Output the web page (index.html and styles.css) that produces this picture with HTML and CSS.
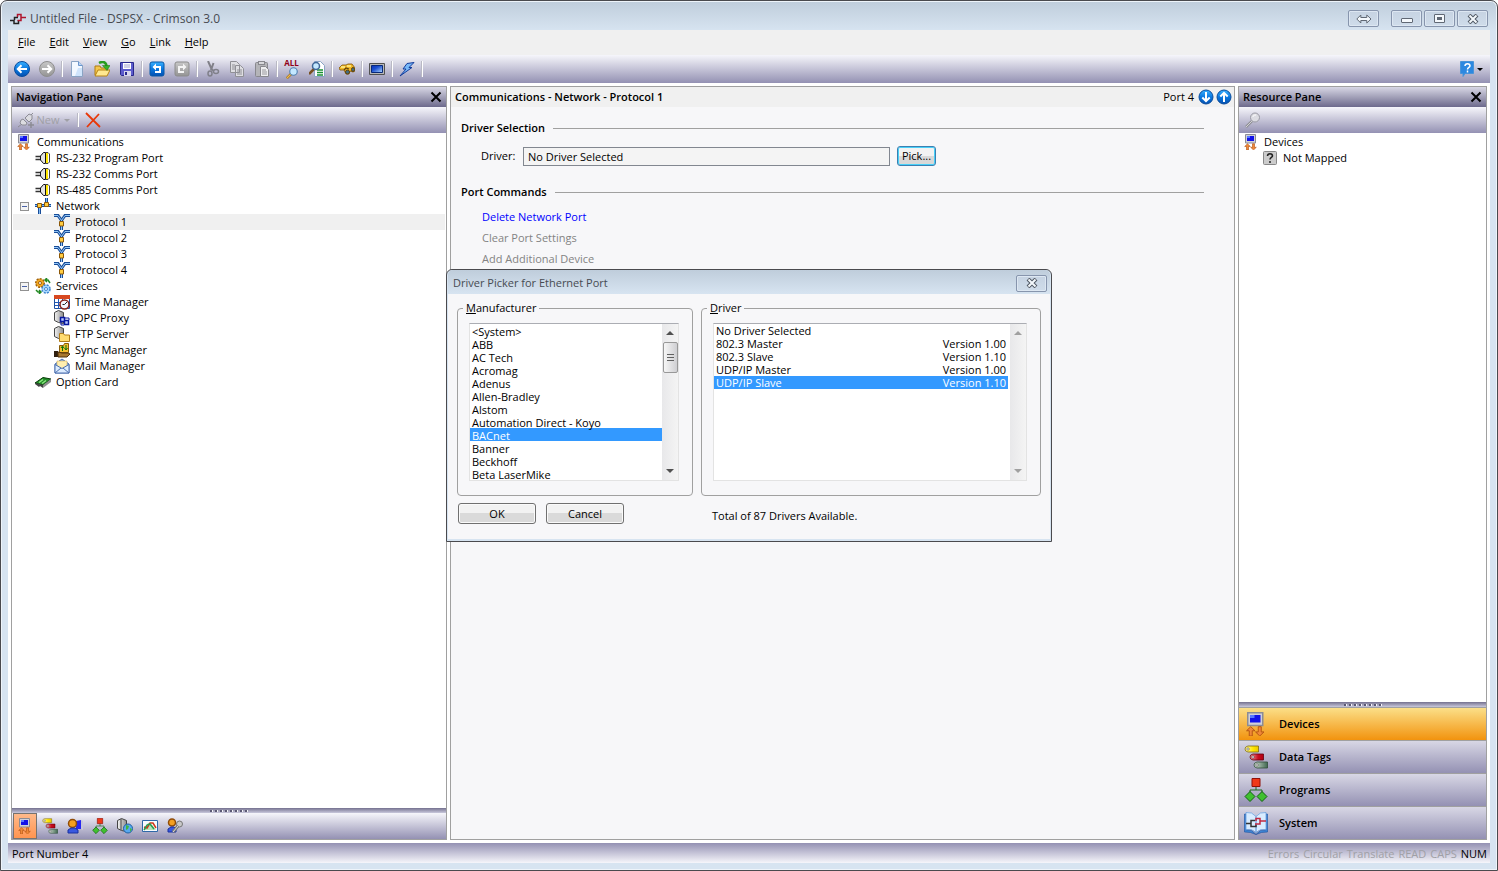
FILE: index.html
```html
<!DOCTYPE html>
<html lang="en">
<head>
    <meta charset="utf-8">
    <title>Untitled File - DSPSX - Crimson 3.0</title>
    <link rel="stylesheet" href="styles.css">
</head>
<body>
    <!-- Icon sprite -->
    <svg class="sprite" width="0" height="0" aria-hidden="true">
        <defs>
            <linearGradient id="blue" x1="0" y1="0" x2="0" y2="1"><stop offset="0" stop-color="#39b0ff"/><stop offset=".5" stop-color="#0a78e0"/><stop offset="1" stop-color="#0450b0"/></linearGradient>
            <linearGradient id="gray" x1="0" y1="0" x2="0" y2="1"><stop offset="0" stop-color="#c8c8c8"/><stop offset="1" stop-color="#949494"/></linearGradient>
            <linearGradient id="screen" x1="0" y1="0" x2="1" y2="1"><stop offset="0" stop-color="#0a2fb8"/><stop offset=".4" stop-color="#1c50d0"/><stop offset="1" stop-color="#b4dcff"/></linearGradient>
            <linearGradient id="metal" x1="0" y1="0" x2="1" y2="0"><stop offset="0" stop-color="#f4f4f4"/><stop offset="1" stop-color="#8c8c8c"/></linearGradient>
            <linearGradient id="yellow" x1="0" y1="0" x2="1" y2="0"><stop offset="0" stop-color="#fff8b0"/><stop offset=".6" stop-color="#ffe600"/><stop offset="1" stop-color="#e8c800"/></linearGradient>
            <linearGradient id="red" x1="0" y1="0" x2="1" y2="0"><stop offset="0" stop-color="#f0a0a0"/><stop offset=".6" stop-color="#c80c20"/><stop offset="1" stop-color="#b00010"/></linearGradient>
            <linearGradient id="green" x1="0" y1="0" x2="1" y2="0"><stop offset="0" stop-color="#d0dcd0"/><stop offset="1" stop-color="#406850"/></linearGradient>
        </defs>
        <symbol id="i-logo" viewBox="0 0 16 16">
            <path d="M0 9.500H4V12.500H8.500V9M4.500 9V6.500H8" fill="none" stroke="#222" stroke-width="1.500"/>
            <path d="M7.500 9.500H11V3.500H7.500V6M11 6.500H16" fill="none" stroke="#b0142c" stroke-width="1.500"/>
        </symbol>
        <symbol id="i-back" viewBox="0 0 16 16"><circle cx="8" cy="8" r="7.500" fill="url(#blue)" stroke="#0a4c9c"/><path d="M13 8H4M7.500 4.300L3.800 8l3.700 3.700" fill="none" stroke="#fff" stroke-width="2"/></symbol>
        <symbol id="i-forward" viewBox="0 0 16 16"><circle cx="8" cy="8" r="7.500" fill="url(#gray)" stroke="#8e8e8e"/><path d="M3 8h9M8.500 4.300L12.200 8l-3.700 3.700" fill="none" stroke="#fff" stroke-width="2"/></symbol>
        <symbol id="i-down" viewBox="0 0 16 16"><circle cx="8" cy="8" r="7" fill="url(#blue)" stroke="#0a4c9c"/><path d="M8 3v9M4.300 8.500L8 12.200l3.700-3.700" fill="none" stroke="#fff" stroke-width="2"/></symbol>
        <symbol id="i-up" viewBox="0 0 16 16"><circle cx="8" cy="8" r="7" fill="url(#blue)" stroke="#0a4c9c"/><path d="M8 13V4M4.300 7.500L8 3.800l3.700 3.700" fill="none" stroke="#fff" stroke-width="2"/></symbol>
        <symbol id="i-new" viewBox="0 0 16 16"><path d="M2.500.5h7l4 4v11h-11z" fill="#f2f8ff" stroke="#8aa4c4"/><path d="M9.500.5v4h4" fill="#b8d4f4" stroke="#6a94cc"/><path d="M9 7h4v8H6z" fill="#cfe4fb"/></symbol>
        <symbol id="i-open" viewBox="0 0 16 16"><path d="M1 14V5h5l1 2h6v7z" fill="#f4c64c" stroke="#b07c10"/><path d="M1 15l3-6h12l-3 6z" fill="#ffe890" stroke="#b88414"/><path d="M5 2c4-2 7-1 7.500 3" fill="none" stroke="#2a9c20" stroke-width="2.500"/><path d="M8.500 4.500h7.500l-3 5z" fill="#38b428" stroke="#187010" stroke-width=".5"/></symbol>
        <symbol id="i-save" viewBox="0 0 16 16"><path d="M1.500 1.500h13v13h-12l-1-1z" fill="#5c5ccc" stroke="#28288c"/><path d="M4 2h8v6H4z" fill="#fff"/><path d="M5 4h6M5 6h6" stroke="#a0a0d0"/><path d="M5 10h7v5H5z" fill="#d8d8ec"/><path d="M6 11h2v3H6z" fill="#28288c"/></symbol>
        <symbol id="i-undo" viewBox="0 0 16 16"><rect x="1" y="1" width="14" height="14" rx="2" fill="url(#blue)" stroke="#0858a8"/><path d="M7 2.500L3.500 6 7 9.500V7h3v3H6v2h6V5H7z" fill="#fff"/></symbol>
        <symbol id="i-redo" viewBox="0 0 16 16"><rect x="1" y="1" width="14" height="14" rx="2" fill="url(#gray)" stroke="#8c8c8c"/><path d="M9 2.500L12.500 6 9 9.500V7H6v3h4v2H4V5h5z" fill="#f4f4f4"/></symbol>
        <symbol id="i-cut" viewBox="0 0 16 16"><path d="M4 0l4 9M9.500 2L7 9" stroke="#808088" stroke-width="2" fill="none"/><ellipse cx="6" cy="12.500" rx="2" ry="2.500" fill="none" stroke="#80808a" stroke-width="1.500"/><ellipse cx="12" cy="10.500" rx="2.500" ry="2" fill="none" stroke="#80808a" stroke-width="1.500"/><path d="M7 8l3 2" stroke="#80808a" stroke-width="2"/></symbol>
        <symbol id="i-copy" viewBox="0 0 16 16"><path d="M1.500.5h6l3 3v8h-9zM6.500 4.500h5l3 3v8h-8z" fill="#dedee2" stroke="#909096"/><path d="M3 4h3M3 6h3M3 8h3M8 9h5M8 11h5M8 13h5" stroke="#909096"/></symbol>
        <symbol id="i-paste" viewBox="0 0 16 16"><rect x="1.500" y="1.500" width="12" height="14" rx="1" fill="#b4b4b8" stroke="#88888e"/><rect x="4.500" y=".5" width="6" height="3" fill="#d8d8dc" stroke="#88888e"/><path d="M6.500 5.500h5l3 3v7h-8z" fill="#eeeef0" stroke="#88888e"/><path d="M8 9h4M8 11h5M8 13h5" stroke="#98989c"/></symbol>
        <symbol id="i-glass" viewBox="0 0 16 16"><path d="M1 15l7-7" stroke="#98702c" stroke-width="3.500"/><path d="M1 15l7-7" stroke="#f0b850" stroke-width="1.500"/><circle cx="10" cy="6" r="5" fill="#c4e8ff" stroke="#5080b0" stroke-width="1.500"/></symbol>
        <symbol id="i-glassoff" viewBox="0 0 16 16"><path d="M1 15l6-6" stroke="#909096" stroke-width="2.500"/><path d="M1 15l6-6" stroke="#d0d0d4"/><circle cx="10" cy="5.500" r="4.500" fill="#dcdce2" stroke="#9a9aa4"/><path d="M8 5c0-1.500 1-2 3-2" stroke="#fff" fill="none"/></symbol>
        <symbol id="i-findin" viewBox="0 0 16 16"><path d="M5.500.5h6l4 4v11h-10z" fill="#fff" stroke="#8aa4c4"/><path d="M8 9h6M8 11.500h6M8 14h6" stroke="#189030" stroke-width="1.500"/><path d="M0 13l5-5" stroke="#785020" stroke-width="2.500"/><circle cx="7" cy="5" r="3.500" fill="#c4e8ff" stroke="#406898" stroke-width="1.500"/></symbol>
        <symbol id="i-binoc" viewBox="0 0 16 16"><path d="M0 7l3-3h4l2-1h4l3 4v3l-2 1-3-1-1 3H7L5 9H1z" fill="#f0b828" stroke="#805408" stroke-width=".8"/><path d="M2 6h4M8 5h4" stroke="#fff090" stroke-width="1.500" fill="none"/><path d="M5 9l2-2 3 1" stroke="#604008" stroke-width="1.200" fill="none"/><ellipse cx="8.500" cy="11" rx="2" ry="2" fill="#407088" stroke="#604008"/><ellipse cx="14" cy="8.500" rx="1.500" ry="2" fill="#407088" stroke="#604008"/></symbol>
        <symbol id="i-screen" viewBox="0 0 16 16"><path d="M.5 2.500h15v11H.5z" fill="#b8b8b8" stroke="#505050"/><path d="M2.500 4.500h11v7h-11z" fill="url(#screen)" stroke="#082878"/></symbol>
        <symbol id="i-bolt" viewBox="0 0 16 16"><path d="M8 2.500l7-1-5 5h3L1 15l6-7H4z" fill="#78b8f8" stroke="#123c9c"/></symbol>
        <symbol id="i-help" viewBox="0 0 16 16"><path d="M1.500.5h13v12H6l-2 3v-3H1.500z" fill="#2c88e0" stroke="#4a94d8"/><path d="M6 5c0-3 5-3 5 0 0 1.500-2.500 1.500-2.500 3.500M8.500 9.500v2" stroke="#fff" stroke-width="1.500" fill="none"/></symbol>
        <symbol id="i-plugnew" viewBox="0 0 16 16"><path d="M0 15l4-3" stroke="#8c8c94"/><path d="M3 8l2-1 4 4-1 2H4l-2-2zM7 6l4-4 2 1 2-2M7 6l4 4 3-3V3" fill="#dcdce0" stroke="#8c8c94"/><path d="M10 13h6M13 10v6" stroke="#8c8c94" stroke-width="1.500"/></symbol>
        <symbol id="i-delete" viewBox="0 0 16 16"><path d="M1 1l14 14M14 2L2 15" stroke="#e83808" stroke-width="1.800" fill="none"/></symbol>
        <symbol id="i-comm" viewBox="0 0 16 16"><path d="M2.500.5h10v8.500h-10z" fill="#d0d0d8" stroke="#8c8c94"/><path d="M4 2h7v5H4z" fill="#1212e8"/><path d="M4 2h3v2H4z" fill="#5878ff"/><path d="M4.500 9.800l2.800 2.700H5.500V16h-2v-3.500H1.700zM10.500 16l-2.800-2.700h1.800V9.800h2v3.500h1.800z" fill="#f08838" stroke="#b05010" stroke-width=".6"/></symbol>
        <symbol id="i-port" viewBox="0 0 16 16"><path d="M0.500 6.500h5M.5 9.500h5" stroke="#333" stroke-width="1.500"/><path d="M5.500 6l3-3.500h2v11h-2l-3-3.500z" fill="#e4e4e4" stroke="#111"/><path d="M11 3h2v10h-2z" fill="#ffe600"/><path d="M11 2.500h2l1.500 1.500v8L13 13.500h-2" fill="none" stroke="#444"/></symbol>
        <symbol id="i-network" viewBox="0 0 16 16"><path d="M0 7.500h16M4.500 8v8M11.500 0v7" stroke="#184c98" stroke-width="3"/><path d="M0 7.500h16M4.500 8v8M11.500 0v7" stroke="#80b8f0"/><path d="M2.500 5.500h4v4h-4zM9.500 4.500h4v4h-4z" fill="#ffcc40" stroke="#8c5808"/></symbol>
        <symbol id="i-protocol" viewBox="0 0 16 16"><path d="M0 1.500h4l3.500 5 3.500-5h5M7.500 6v10" stroke="#184c98" stroke-width="3" fill="none"/><path d="M0 1.500h4l3.500 5 3.500-5h5M7.500 6v10" stroke="#94c8f8" fill="none"/><path d="M5.500 7.500h4v4.500h-4z" fill="#ffcc40" stroke="#8c5808"/></symbol>
        <symbol id="i-gears" viewBox="0 0 16 16"><circle cx="5" cy="5" r="4" fill="#f4b030" stroke="#a06008" stroke-width="2" stroke-dasharray="2 1"/><circle cx="5" cy="5" r="3.500" fill="#f4a820"/><circle cx="5" cy="5" r="1.500" fill="#fff" stroke="#a06008"/><circle cx="11" cy="11" r="3.800" fill="#a8d8ff" stroke="#4088d0" stroke-width="2" stroke-dasharray="2 1"/><circle cx="11" cy="11" r="3.200" fill="#a8d8ff"/><circle cx="11" cy="11" r="1.500" fill="#fff" stroke="#4088d0"/><path d="M10 2h3l2 3M12 0l-2 2 2 2M6 14H3l-2-2M4 16l2-2-2-2" stroke="#208820" stroke-width="1.500" fill="none"/></symbol>
        <symbol id="i-time" viewBox="0 0 16 16"><path d="M.5 1.500h15v13H.5z" fill="#fff" stroke="#2050a0"/><path d="M0 1h16v4H0z" fill="#d84820"/><path d="M1 8.500h14M1 11.500h14M4.500 5v9M8.500 5v9" stroke="#2058b8"/><circle cx="10.500" cy="10.500" r="4.500" fill="#f4f4ff" stroke="#882018" stroke-width="1.500"/><path d="M10.500 10.500L13 8M10.500 10.500h-2" stroke="#222"/></symbol>
        <symbol id="i-opc" viewBox="0 0 16 16"><path d="M.5 2.500l4-2 5 2v11l-5-1-4-2z" fill="url(#metal)" stroke="#444"/><path d="M6.500 7.500h4v4h-4zM10.500 10.500h4v4h-4z" fill="#b8c8ff" stroke="#0818a0" stroke-width="1.500"/><path d="M10 8h5v2M7 12v3h3" fill="none" stroke="#0818a0"/></symbol>
        <symbol id="i-ftp" viewBox="0 0 16 16"><path d="M.5 2.500l4-2 5 2v11l-5-1-4-2z" fill="url(#metal)" stroke="#444"/><path d="M5.500 15.500v-8h4l1 1.500h5v6.500z" fill="#ffdc70" stroke="#b07c18"/></symbol>
        <symbol id="i-sync" viewBox="0 0 16 16"><path d="M5.500 3.500h4l1-2h4v9h-9z" fill="#f4c030" stroke="#885c08"/><path d="M8.500 9V5M7 6l1.500-2L10 6M12 3v4M10.500 6L12 8l1.500-2" stroke="#087008" fill="none"/><path d="M0 9h4v6H0z" fill="#302010"/><path d="M4 10l4 1h6l2 1-3 3H4z" fill="#a87830" stroke="#503008"/></symbol>
        <symbol id="i-mail" viewBox="0 0 16 16"><path d="M1 6l7-5 7 5v9H1z" fill="#88b0e8" stroke="#4c70b0"/><path d="M3 8V3h10v5l-5 3z" fill="#ffeeb0" stroke="#c8a040" stroke-width=".5"/><path d="M1 6.500l7 4 7-4V15H1z" fill="#dcecff" stroke="#4c70b0"/><path d="M1 15l6-5M15 15l-6-5" stroke="#4c70b0"/></symbol>
        <symbol id="i-card" viewBox="0 0 16 16"><path d="M0 9l8-5.500 8 1.500-8 6z" fill="#208c28" stroke="#083c08"/><path d="M4 8.500l4-3M7 9.500l4-3" stroke="#90e880" stroke-width="1.500"/><path d="M0 9l8 2v3l-3-2-1 1-4-3z" fill="#444"/><path d="M8 11l8-6v3l-8 6z" fill="#909090"/></symbol>
        <symbol id="i-unmapped" viewBox="0 0 16 16"><rect x="1.500" y="1.500" width="13" height="13" rx="1" fill="#ccc" stroke="#888"/><path d="M5.500 6c0-3 5-3 5 0 0 1.500-2.500 1.500-2.500 3.500M8 11v2" stroke="#222" stroke-width="1.500" fill="none"/></symbol>
        <symbol id="i-tags" viewBox="0 0 24 24"><path d="M14.500 1v6H4Q1 6.500 1 4T4 1z" fill="url(#yellow)" stroke="#806c10" stroke-width=".8"/><path d="M19.500 9v6H9q-3-.5-3-3t3-3z" fill="url(#red)" stroke="#680010" stroke-width=".8"/><path d="M23.500 17v6H13q-3-.5-3-3t3-3z" fill="url(#green)" stroke="#304c38" stroke-width=".8"/><path d="M3 3h2v2H3zM8 11h2v2H8zM12 19h2v2h-2z" fill="#fff" stroke="#444" stroke-width=".5"/></symbol>
        <symbol id="i-programs" viewBox="0 0 24 24"><path d="M12 8v4M6 17v-5h12v5" fill="none" stroke="#206820"/><path d="M8 .5h8v8H8z" fill="#f03818" stroke="#901008"/><path d="M1 18.500l5-5 5 5-5 5zM13 18.500l5-5 5 5-5 5z" fill="#40c030" stroke="#106010"/></symbol>
        <symbol id="i-user" viewBox="0 0 16 16"><path d="M9 3l5-1v9H9z" fill="#2828f0"/><path d="M14 2l2 1v9l-2-1z" fill="#c8c8d8"/><circle cx="5.500" cy="5.500" r="4" fill="#f4a020" stroke="#904c08" stroke-width="1.500"/><path d="M1 15v-3l3-2h4l3 2v3z" fill="#3858e0" stroke="#1830a0"/></symbol>
        <symbol id="i-web" viewBox="0 0 16 16"><path d="M.5 2.500l4-2 5 2v11l-5-1-4-2z" fill="url(#metal)" stroke="#444"/><path d="M4 1v11" stroke="#444"/><circle cx="11" cy="10.500" r="4.500" fill="#58a8f0" stroke="#2060a0"/><path d="M9 7l3 1-1 3-2 1zM13 10l2 1-2 3z" fill="#40b840"/></symbol>
        <symbol id="i-chart" viewBox="0 0 16 16"><path d="M.5 2.500h15v11H.5z" fill="#f8fcff" stroke="#3068a8"/><path d="M2 12L6 5l4 2 4 5z" fill="#b8e4b8"/><path d="M2 9l3 1 3-5h3l3 5" fill="none" stroke="#d03818" stroke-width="1.500"/><path d="M2 12l3-5 3-1 4 5" fill="none" stroke="#289c50" stroke-width="1.500"/></symbol>
        <symbol id="i-userkey" viewBox="0 0 16 16"><circle cx="5" cy="4.500" r="3.500" fill="#f4a020" stroke="#904c08" stroke-width="1.500"/><path d="M1 14v-3l3-2h3l2 2v3z" fill="#3858e0" stroke="#1830a0"/><circle cx="12.500" cy="6" r="3" fill="#c8c8c8" stroke="#777"/><path d="M11 8l-5 6" stroke="#777" stroke-width="3"/><path d="M11 8l-5 6" stroke="#ddd"/></symbol>
        <symbol id="i-system" viewBox="0 0 24 24"><path d="M.5 3h2v16l5 .5 4.500 4 4.500-4 5-.5V3h2v18l-6 .5-5.500 2-5.500-2-6-.5z" fill="#3c84d4" stroke="#1c50a0" stroke-width=".6"/><path d="M2 1.500q6-1 10 4v16q-4-4-10-3zM22 1.500q-6-1-10 4v16q4-4 10-3z" fill="#d8ecff" stroke="#6ca0dc" stroke-width=".8"/><path d="M2 12.500h5v3h5v-2M7 12V9.500h4" fill="none" stroke="#333" stroke-width="1.500"/><path d="M22 10h-6v3h-5M16 10V7.500h-4V10" fill="none" stroke="#c02840" stroke-width="1.500"/></symbol>
        <symbol id="i-close" viewBox="0 0 12 12"><path d="M1.500 1.500l9 9M10.500 1.500l-9 9" stroke="#000" stroke-width="2"/></symbol>
        <symbol id="i-winclose" viewBox="0 0 12 10"><path d="M2 1l8 8M10 1L2 9" stroke="#505864" stroke-width="4"/><path d="M2.500 1.500l7 7M9.500 1.500l-7 7" stroke="#f4f8fc" stroke-width="2"/></symbol>
        <symbol id="i-resize" viewBox="0 0 16 10"><path d="M.8 5l4-4v2.500h6V1l4.200 4-4.200 4V6.500h-6V9z" fill="#f4f8fc" stroke="#606874"/></symbol>
    </svg>

    <div class="window">
        <header class="titlebar">
            <svg class="icon"><use href="#i-logo"/></svg>
            <span class="title">Untitled File - DSPSX - Crimson 3.0</span>
            <button class="win-btn win-btn-resize" title="Resize"><svg width="16" height="10"><use href="#i-resize"/></svg></button>
            <button class="win-btn" title="Minimize"><span class="glyph-min"></span></button>
            <button class="win-btn" title="Maximize"><span class="glyph-max"></span></button>
            <button class="win-btn" title="Close"><svg width="12" height="10"><use href="#i-winclose"/></svg></button>
        </header>

        <div class="client">
            <nav class="menubar">
                <button><u>F</u>ile</button>
                <button><u>E</u>dit</button>
                <button><u>V</u>iew</button>
                <button><u>G</u>o</button>
                <button><u>L</u>ink</button>
                <button><u>H</u>elp</button>
            </nav>

            <div class="toolbar main-toolbar">
                <button title="Back"><svg class="icon"><use href="#i-back"/></svg></button>
                <button title="Forward"><svg class="icon"><use href="#i-forward"/></svg></button>
                <span class="sep"></span>
                <button title="New"><svg class="icon"><use href="#i-new"/></svg></button>
                <button title="Open"><svg class="icon"><use href="#i-open"/></svg></button>
                <button title="Save"><svg class="icon"><use href="#i-save"/></svg></button>
                <span class="sep"></span>
                <button title="Undo"><svg class="icon"><use href="#i-undo"/></svg></button>
                <button title="Redo"><svg class="icon"><use href="#i-redo"/></svg></button>
                <span class="sep"></span>
                <button title="Cut"><svg class="icon"><use href="#i-cut"/></svg></button>
                <button title="Copy"><svg class="icon"><use href="#i-copy"/></svg></button>
                <button title="Paste"><svg class="icon"><use href="#i-paste"/></svg></button>
                <span class="sep"></span>
                <button title="Find All" class="find-all"><span>ALL</span><svg width="12" height="12"><use href="#i-glass"/></svg></button>
                <button title="Find in File"><svg class="icon"><use href="#i-findin"/></svg></button>
                <span class="sep"></span>
                <button title="Search"><svg class="icon"><use href="#i-binoc"/></svg></button>
                <span class="sep"></span>
                <button title="Emulator"><svg class="icon"><use href="#i-screen"/></svg></button>
                <span class="sep"></span>
                <button title="Download"><svg class="icon"><use href="#i-bolt"/></svg></button>
                <span class="sep"></span>
                <button title="Help" class="help"><svg class="icon"><use href="#i-help"/></svg><span class="caret"></span></button>
            </div>

            <main class="workspace">
                <section class="pane nav-pane">
                    <div class="pane-header">
                        <h2>Navigation Pane</h2>
                        <button class="pane-close" title="Close"><svg width="12" height="12"><use href="#i-close"/></svg></button>
                    </div>
                    <div class="toolbar pane-toolbar">
                        <button class="new-btn" disabled><svg class="icon"><use href="#i-plugnew"/></svg>New<span class="caret"></span></button>
                        <span class="sep"></span>
                        <button title="Delete"><svg class="icon"><use href="#i-delete"/></svg></button>
                    </div>
                    <ul class="tree">
                        <li class="root"><svg class="icon"><use href="#i-comm"/></svg>Communications</li>
                        <li class="level1"><svg class="icon"><use href="#i-port"/></svg>RS-232 Program Port</li>
                        <li class="level1"><svg class="icon"><use href="#i-port"/></svg>RS-232 Comms Port</li>
                        <li class="level1"><svg class="icon"><use href="#i-port"/></svg>RS-485 Comms Port</li>
                        <li class="branch"><button class="expander" title="Collapse"></button><svg class="icon"><use href="#i-network"/></svg>Network</li>
                        <li class="level2 current"><svg class="icon"><use href="#i-protocol"/></svg>Protocol 1</li>
                        <li class="level2"><svg class="icon"><use href="#i-protocol"/></svg>Protocol 2</li>
                        <li class="level2"><svg class="icon"><use href="#i-protocol"/></svg>Protocol 3</li>
                        <li class="level2"><svg class="icon"><use href="#i-protocol"/></svg>Protocol 4</li>
                        <li class="branch"><button class="expander" title="Collapse"></button><svg class="icon"><use href="#i-gears"/></svg>Services</li>
                        <li class="level2"><svg class="icon"><use href="#i-time"/></svg>Time Manager</li>
                        <li class="level2"><svg class="icon"><use href="#i-opc"/></svg>OPC Proxy</li>
                        <li class="level2"><svg class="icon"><use href="#i-ftp"/></svg>FTP Server</li>
                        <li class="level2"><svg class="icon"><use href="#i-sync"/></svg>Sync Manager</li>
                        <li class="level2"><svg class="icon"><use href="#i-mail"/></svg>Mail Manager</li>
                        <li class="level1"><svg class="icon"><use href="#i-card"/></svg>Option Card</li>
                    </ul>
                    <div class="splitter"><span></span></div>
                    <div class="toolbar category-bar">
                        <button class="selected" title="Communications"><svg class="icon"><use href="#i-comm"/></svg></button>
                        <button title="Data Tags"><svg class="icon"><use href="#i-tags"/></svg></button>
                        <button title="Display Pages"><svg class="icon"><use href="#i-user"/></svg></button>
                        <button title="Programs"><svg class="icon"><use href="#i-programs"/></svg></button>
                        <button title="Web Server"><svg class="icon"><use href="#i-web"/></svg></button>
                        <button title="Data Logger"><svg class="icon"><use href="#i-chart"/></svg></button>
                        <button title="Security"><svg class="icon"><use href="#i-userkey"/></svg></button>
                    </div>
                </section>

                <section class="pane editor">
                    <div class="editor-header">
                        <h2>Communications - Network - Protocol 1</h2>
                        <span>Port 4</span>
                        <button title="Next"><svg class="icon"><use href="#i-down"/></svg></button>
                        <button title="Previous"><svg class="icon"><use href="#i-up"/></svg></button>
                    </div>
                    <div class="editor-body">
                        <h3>Driver Selection</h3>
                        <div class="driver-row">
                            <label for="driver">Driver:</label>
                            <input id="driver" type="text" value="No Driver Selected" readonly>
                            <button class="pick">Pick...</button>
                        </div>
                        <h3>Port Commands</h3>
                        <ul class="commands">
                            <li><a href="#delete">Delete Network Port</a></li>
                            <li>Clear Port Settings</li>
                            <li>Add Additional Device</li>
                        </ul>
                    </div>
                </section>

                <section class="pane resource-pane">
                    <div class="pane-header">
                        <h2>Resource Pane</h2>
                        <button class="pane-close" title="Close"><svg width="12" height="12"><use href="#i-close"/></svg></button>
                    </div>
                    <div class="toolbar pane-toolbar">
                        <button title="Find" disabled><svg class="icon"><use href="#i-glassoff"/></svg></button>
                    </div>
                    <ul class="tree">
                        <li class="root"><svg class="icon"><use href="#i-comm"/></svg>Devices</li>
                        <li class="level1"><svg class="icon"><use href="#i-unmapped"/></svg>Not Mapped</li>
                    </ul>
                    <div class="splitter"><span></span></div>
                    <div class="categories">
                        <button class="selected"><svg width="24" height="24"><use href="#i-comm"/></svg>Devices</button>
                        <button><svg width="24" height="24"><use href="#i-tags"/></svg>Data Tags</button>
                        <button><svg width="24" height="24"><use href="#i-programs"/></svg>Programs</button>
                        <button><svg width="24" height="24"><use href="#i-system"/></svg>System</button>
                    </div>
                </section>
            </main>

            <footer class="statusbar">
                <span class="message">Port Number 4</span>
                <span>Errors</span>
                <span>Circular</span>
                <span>Translate</span>
                <span>READ</span>
                <span>CAPS</span>
                <span class="on">NUM</span>
            </footer>
        </div>
    </div>

    <div class="dialog" role="dialog" aria-labelledby="picker-title">
        <div class="dialog-title">
            <span id="picker-title">Driver Picker for Ethernet Port</span>
            <button class="win-btn" title="Close"><svg width="12" height="10"><use href="#i-winclose"/></svg></button>
        </div>
        <div class="dialog-body">
            <fieldset class="manufacturers">
                <legend><label for="manufacturer"><u>M</u>anufacturer</label></legend>
                <div class="listbox">
                    <select id="manufacturer" size="12">
                        <option>&lt;System&gt;</option>
                        <option>ABB</option>
                        <option>AC Tech</option>
                        <option>Acromag</option>
                        <option>Adenus</option>
                        <option>Allen-Bradley</option>
                        <option>Alstom</option>
                        <option>Automation Direct - Koyo</option>
                        <option selected>BACnet</option>
                        <option>Banner</option>
                        <option>Beckhoff</option>
                        <option>Beta LaserMike</option>
                    </select>
                    <div class="scrollbar">
                        <span class="arrow-up"></span>
                        <span class="thumb"></span>
                        <span class="arrow-down"></span>
                    </div>
                </div>
            </fieldset>
            <fieldset class="drivers">
                <legend><u>D</u>river</legend>
                <div class="listbox">
                    <div class="list">
                        <table>
                            <tr><td>No Driver Selected</td><td></td></tr>
                            <tr><td>802.3 Master</td><td>Version 1.00</td></tr>
                            <tr><td>802.3 Slave</td><td>Version 1.10</td></tr>
                            <tr><td>UDP/IP Master</td><td>Version 1.00</td></tr>
                            <tr class="selected"><td>UDP/IP Slave</td><td>Version 1.10</td></tr>
                        </table>
                    </div>
                    <div class="scrollbar disabled">
                        <span class="arrow-up"></span>
                        <span class="arrow-down"></span>
                    </div>
                </div>
            </fieldset>
            <div class="dialog-buttons">
                <button>OK</button>
                <button>Cancel</button>
            </div>
            <p class="total">Total of 87 Drivers Available.</p>
        </div>
    </div>
</body>
</html>
```
FILE: styles.css
```css
* {
    box-sizing: border-box;
}
body {
    margin: 0;
    background-color: #fff;
    font-family: "Segoe UI", "Open Sans", "Noto Sans", sans-serif;
    font-size: 11px;
    line-height: 16px;
    color: #000;
}
button,
input,
select {
    font: inherit;
    color: inherit;
}
button {
    display: flex;
    align-items: center;
    justify-content: center;
    margin: 0;
    padding: 0;
    border: none;
    background: none;
}
h2,
h3 {
    margin: 0;
    font-size: 11px;
    font-weight: 600;
}
ul {
    margin: 0;
    padding: 0;
    list-style: none;
}
.sprite {
    position: absolute;
}
.icon {
    width: 16px;
    height: 16px;
    flex: none;
}

/* Window frame */
.window {
    height: 100vh;
    display: flex;
    flex-direction: column;
    padding: 0 7px 7px;
    border: 1px solid #4a4a4e;
    border-radius: 7px 7px 0 0;
    background: linear-gradient(#bfcddb, #d7e4f1 30px);
    box-shadow: inset 0 0 0 1px #eef4fa;
}
.titlebar {
    height: 29px;
    flex: none;
    display: flex;
    align-items: center;
    padding: 6px 2px 0;
    font-size: 12px;
    color: #474b52;
}
.title {
    flex: 1;
    margin-left: 4px;
}
.win-btn {
    width: 31px;
    height: 17px;
    margin-left: 2px;
    border: 1px solid #8795ad;
    border-radius: 2px;
    background: linear-gradient(#c6d3e2, #cfdcea);
    box-shadow: inset 0 0 0 1px #dde7f2;
}
.win-btn-resize {
    margin-right: 10px;
}
.glyph-min {
    width: 12px;
    height: 5px;
    margin-top: 4px;
    border: 1px solid #606874;
    border-radius: 1px;
    background-color: #f4f8fc;
}
.glyph-max {
    width: 11px;
    height: 9px;
    border: 1px solid #606874;
    border-radius: 1px;
    background-color: #606874;
    box-shadow: inset 0 0 0 2px #f4f8fc;
}
.client {
    flex: 1;
    min-height: 0;
    display: flex;
    flex-direction: column;
    background-color: #fff;
}
.menubar {
    height: 25px;
    flex: none;
    display: flex;
    gap: 14px;
    padding: 0 10px 2px;
    background-color: #f0f0f0;
}

/* Toolbars */
.toolbar {
    flex: none;
    display: flex;
    align-items: stretch;
    background: linear-gradient(#f6f6fb, #9491b3);
}
.toolbar button {
    width: 25px;
}
.toolbar .sep {
    width: 2px;
    margin: 6px 1px 6px 2px;
    background: linear-gradient(90deg, #b9b9c4 50%, #fff 50%);
}
.main-toolbar {
    height: 28px;
    padding-left: 1px;
}
.toolbar .find-all {
    flex-direction: column;
}
.find-all span {
    height: 7px;
    font-size: 8px;
    line-height: 6px;
    font-weight: bold;
    color: #900018;
}
.toolbar .help {
    width: 28px;
    margin-left: auto;
    margin-right: 5px;
}
.caret {
    margin-left: 2px;
    border: 3px solid transparent;
    border-top-color: currentColor;
    border-bottom: none;
}

/* Panes */
.workspace {
    flex: 1;
    min-height: 0;
    display: flex;
    gap: 3px;
    padding: 3px;
}
.pane {
    display: flex;
    flex-direction: column;
    border: 1px solid #a0a0a0;
    background-color: #fff;
}
.nav-pane {
    width: 436px;
}
.editor {
    flex: 1;
    background-color: #f7f7f9;
}
.resource-pane {
    width: 249px;
}
.pane-header {
    height: 20px;
    flex: none;
    display: flex;
    align-items: center;
    justify-content: space-between;
    padding: 0 4px;
    background: linear-gradient(#d8d7e5, #6d6a8c);
}
.pane-toolbar {
    height: 26px;
    padding-left: 1px;
}
.toolbar .new-btn {
    width: 62px;
    gap: 3px;
    color: #a0a0a6;
}
.tree {
    flex: 1;
    padding: 1px;
}
.tree li {
    display: flex;
    align-items: center;
    gap: 5px;
    height: 16px;
}
.tree .root {
    gap: 5px;
    padding-left: 3px;
}
.tree .level1 {
    padding-left: 22px;
}
.tree .level2 {
    padding-left: 41px;
}
.tree .branch {
    padding-left: 7px;
}
.tree .current {
    background-color: #f0f0f0;
}
.tree .expander {
    width: 9px;
    height: 9px;
    margin-right: 1px;
    border: 1px solid #919191;
    background: linear-gradient(#4b63a7, #4b63a7) center / 5px 1px no-repeat, #f4f4f4;
}
.splitter {
    height: 5px;
    flex: none;
    display: flex;
    justify-content: center;
    align-items: center;
    background: linear-gradient(#74718f, #c9c8dc);
}
.splitter span {
    width: 38px;
    height: 2px;
    background: repeating-linear-gradient(90deg, #5c5a74 0 2px, #f4f4f8 2px 3px, transparent 3px 5px);
}
.category-bar {
    height: 26px;
    gap: 1px;
    padding: 0 1px;
}
.category-bar button {
    width: 24px;
}
.category-bar .selected {
    border: 1px solid #77736f;
    background: linear-gradient(#ffb98a, #ff9450);
}
.categories button {
    width: 100%;
    height: 33px;
    justify-content: flex-start;
    gap: 11px;
    padding: 0 5px;
    border-top: 1px solid #a0a0a0;
    background: linear-gradient(#d8d7e5, #9491b3);
    font-weight: 600;
}
.categories .selected {
    background: linear-gradient(#fbdf88, #f2930e);
}

/* Editor */
.editor-header {
    height: 20px;
    flex: none;
    display: flex;
    align-items: center;
    gap: 2px;
    padding: 0 2px 0 4px;
    background-color: #f0f0f0;
}
.editor-header h2 {
    flex: 1;
}
.editor-header span {
    margin-right: 2px;
}
.editor-body {
    padding: 13px 30px 0 10px;
}
.editor-body h3 {
    display: flex;
    align-items: center;
    gap: 8px;
}
.editor-body h3::after {
    content: "";
    flex: 1;
    height: 1px;
    background-color: #a0a0a0;
}
.driver-row {
    display: flex;
    align-items: center;
    margin: 10px 0 18px 20px;
}
.driver-row label {
    width: 42px;
}
.driver-row input {
    width: 367px;
    height: 19px;
    margin-right: 7px;
    padding: 0 4px;
    border: 1px solid #828790;
    background-color: #f4f4f4;
}
.pick {
    width: 39px;
    height: 20px;
    border: 1px solid #3c7fb1;
    border-radius: 3px;
    background: linear-gradient(#f2f2f2 50%, #d8d8d8 50%);
    box-shadow: inset 0 0 0 1px #48d0f8;
}
.commands {
    padding: 6px 0 0 21px;
    color: #838383;
    line-height: 21px;
}
.commands a {
    color: #00f;
    text-decoration: none;
}
.statusbar {
    height: 20px;
    flex: none;
    display: flex;
    align-items: center;
    gap: 4px;
    padding: 2px 3px 0 4px;
    background: linear-gradient(#9491b3, #f6f6fb);
    color: #a0a0a6;
}
.statusbar .message {
    flex: 1;
    color: #000;
}
.statusbar .on {
    color: #000;
}

/* Driver picker */
.dialog {
    position: absolute;
    left: 446px;
    top: 269px;
    width: 606px;
    border: 1px solid #4a4a4e;
    border-radius: 6px 6px 0 0;
    background-color: #d7e4f1;
    padding: 0 1px 2px;
}
.dialog-title {
    height: 24px;
    display: flex;
    align-items: center;
    justify-content: space-between;
    padding: 2px 3px 0 5px;
    border-radius: 5px 5px 0 0;
    background: linear-gradient(#bfcddb, #d7e4f1);
    color: #474b52;
}
.dialog-body {
    display: grid;
    grid-template-columns: 236px 340px;
    column-gap: 8px;
    padding: 6px 9px 15px;
    background-color: #f7f7f9;
}
fieldset {
    min-width: 0;
    margin: 0;
    padding: 7px 13px 14px 11px;
    border: 1px solid #a0a0a0;
    border-radius: 4px;
}
legend {
    margin-left: -6px;
    padding: 0 3px;
}
.listbox {
    height: 158px;
    display: flex;
    border: 1px solid #e3e3e3;
    border-top-color: #abadb3;
    background-color: #fff;
}
.listbox select {
    flex: 1;
    min-width: 0;
    height: 156px;
    padding: 0;
    border: none;
    outline: none;
    overflow: hidden;
    background-color: #fff;
}
.listbox option {
    height: 13px;
    min-height: 13px;
    padding: 0 2px;
    line-height: 12px;
}
.listbox option:checked {
    background: #39f linear-gradient(#39f, #39f);
    color: #fff;
}
.list {
    flex: 1;
    padding-right: 2px;
}
.list table {
    width: 100%;
    border-collapse: collapse;
}
.list td {
    height: 13px;
    padding: 0 2px;
    line-height: 13px;
}
.list td:last-child {
    text-align: right;
}
.list .selected {
    background-color: #39f;
    color: #fff;
}
.scrollbar {
    width: 16px;
    display: flex;
    flex-direction: column;
    align-items: center;
    padding: 7px 0;
    background: linear-gradient(90deg, #e8e8ea, #f4f4f4);
}
.arrow-up,
.arrow-down {
    border: 4px solid transparent;
}
.arrow-up {
    border-top: none;
    border-bottom-color: #505050;
}
.arrow-down {
    margin-top: auto;
    border-bottom: none;
    border-top-color: #505050;
}
.disabled .arrow-up {
    border-bottom-color: #a0a0a0;
}
.disabled .arrow-down {
    border-top-color: #a0a0a0;
}
.thumb {
    width: 15px;
    height: 31px;
    margin-top: 7px;
    border: 1px solid #989898;
    border-radius: 2px;
    background:
        repeating-linear-gradient(#606060 0 1px, transparent 1px 3px) center / 7px 8px no-repeat,
        linear-gradient(90deg, #f6f6f6, #cfcfd2);
}
.dialog-buttons {
    display: flex;
    gap: 10px;
    padding: 7px 0 0 1px;
}
.dialog-buttons button {
    width: 78px;
    height: 21px;
    border: 1px solid #707070;
    border-radius: 3px;
    background: linear-gradient(#f2f2f2 50%, #dadada 50%);
    box-shadow: inset 0 0 0 1px #fafafa;
}
.total {
    margin: 12px 0 0 11px;
}
```
